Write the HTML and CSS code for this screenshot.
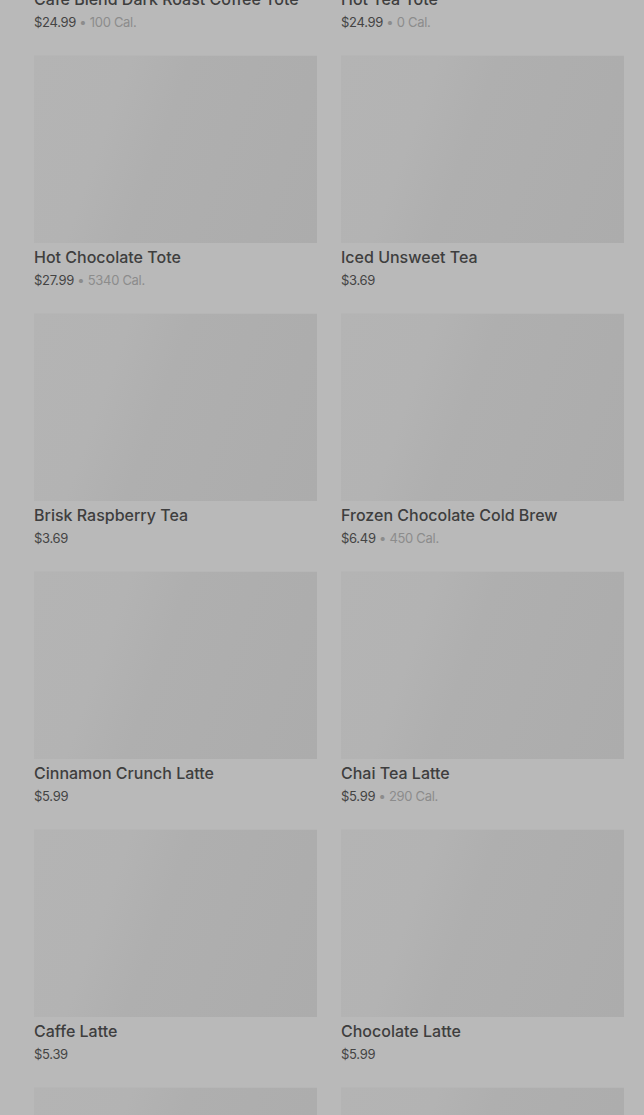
FILE: index.html
```html
<!DOCTYPE html>
<html lang="en">
<head>
  <meta charset="UTF-8">
  <meta name="viewport" content="width=device-width, initial-scale=1.0">
  <title>Menu</title>
  <link rel="stylesheet" href="styles.css">
</head>
<body>
  <div class="overlay">
    <ul class="grid">
      <li class="card">
        <div class="thumb"></div>
        <h3>Cafe Blend Dark Roast Coffee Tote</h3>
        <p class="meta">$24.99<span class="cal"> • 100 Cal.</span></p>
      </li>
      <li class="card">
        <div class="thumb"></div>
        <h3>Hot Tea Tote</h3>
        <p class="meta">$24.99<span class="cal"> • 0 Cal.</span></p>
      </li>
      <li class="card">
        <div class="thumb"></div>
        <h3>Hot Chocolate Tote</h3>
        <p class="meta">$27.99<span class="cal"> • 5340 Cal.</span></p>
      </li>
      <li class="card">
        <div class="thumb"></div>
        <h3>Iced Unsweet Tea</h3>
        <p class="meta">$3.69</p>
      </li>
      <li class="card">
        <div class="thumb"></div>
        <h3>Brisk Raspberry Tea</h3>
        <p class="meta">$3.69</p>
      </li>
      <li class="card">
        <div class="thumb"></div>
        <h3>Frozen Chocolate Cold Brew</h3>
        <p class="meta">$6.49<span class="cal"> • 450 Cal.</span></p>
      </li>
      <li class="card">
        <div class="thumb"></div>
        <h3>Cinnamon Crunch Latte</h3>
        <p class="meta">$5.99</p>
      </li>
      <li class="card">
        <div class="thumb"></div>
        <h3>Chai Tea Latte</h3>
        <p class="meta">$5.99<span class="cal"> • 290 Cal.</span></p>
      </li>
      <li class="card">
        <div class="thumb"></div>
        <h3>Caffe Latte</h3>
        <p class="meta">$5.39</p>
      </li>
      <li class="card">
        <div class="thumb"></div>
        <h3>Chocolate Latte</h3>
        <p class="meta">$5.99</p>
      </li>
      <li class="card">
        <div class="thumb"></div>
      </li>
      <li class="card">
        <div class="thumb"></div>
      </li>
    </ul>
  </div>
</body>
</html>
```

FILE: styles.css
```css
html, body {
  margin: 0;
  padding: 0;
  height: 100%;
  overflow: hidden;
  background: #b9b9b9;
}
body {
  font-family: Inter, "Noto Sans", Arial, sans-serif;
  color: #3b3b3b;
}
.overlay {
  padding: 0 20px 0 34px;
}
.grid {
  list-style: none;
  margin: -203px 0 0;
  padding: 0;
  display: grid;
  grid-template-columns: 283px 283px;
  column-gap: 24px;
  row-gap: 24px;
}
.card {
  display: flex;
  flex-direction: column;
}
.thumb {
  height: 188px;
  background: linear-gradient(110deg, #b4b4b4 0%, #b3b3b3 28%, #afafaf 45%, #acacac 100%);
  box-shadow: inset 0 1px 0 #b6b6b6;
}
.card h3 {
  margin: 4px 0 0;
  font-size: 16px;
  line-height: 20px;
  font-weight: 500;
  color: #3e3e3e;
}
.meta {
  margin: 4px 0 0;
  font-size: 13px;
  line-height: 18px;
  color: #444;
  letter-spacing: -0.3px;
}
.cal {
  color: #8c8c8c;
}
```
